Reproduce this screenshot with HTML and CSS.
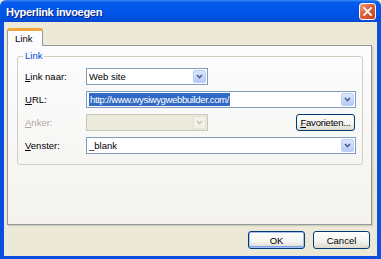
FILE: index.html
```html
<!DOCTYPE html>
<html lang="nl">
<head>
  <meta charset="UTF-8">
  <title>Hyperlink invoegen</title>
  <link rel="stylesheet" href="styles.css">
</head>
<body>

  <div class="window">
    <div class="titlebar">
      <span class="title">Hyperlink invoegen</span>
      <span class="close">
        <svg width="9" height="9" viewBox="0 0 9 9"><path d="M1 1 L8 8 M8 1 L1 8" stroke="#fff" stroke-width="1.8" stroke-linecap="square"/></svg>
      </span>
    </div>

    <div class="client">
      <div class="tabs">
        <div class="tab">Link</div>
      </div>

      <div class="panel">
        <fieldset class="group">
          <legend>Link</legend>

          <div class="row">
            <label><u>L</u>ink naar:</label>
            <div class="combo short">
              <span class="value">Web site</span>
              <span class="arrow"><svg width="7" height="5" viewBox="0 0 7 5"><path d="M1 1 L3.5 3.5 L6 1" fill="none" stroke="#4d6185" stroke-width="1.6"/></svg></span>
            </div>
          </div>

          <div class="row">
            <label><u>U</u>RL:</label>
            <div class="combo wide">
              <span class="value"><span class="selected">http://www.wysiwygwebbuilder.com/</span></span>
              <span class="arrow"><svg width="7" height="5" viewBox="0 0 7 5"><path d="M1 1 L3.5 3.5 L6 1" fill="none" stroke="#4d6185" stroke-width="1.6"/></svg></span>
            </div>
          </div>

          <div class="row">
            <label class="disabled"><u>A</u>nker:</label>
            <div class="combo short off">
              <span class="value"></span>
              <span class="arrow"><svg width="7" height="5" viewBox="0 0 7 5"><path d="M1 1 L3.5 3.5 L6 1" fill="none" stroke="#c9c7ba" stroke-width="1.6"/></svg></span>
            </div>
            <button type="button" class="btn fav"><u>F</u>avorieten...</button>
          </div>

          <div class="row">
            <label><u>V</u>enster:</label>
            <div class="combo wide">
              <span class="value">_blank</span>
              <span class="arrow"><svg width="7" height="5" viewBox="0 0 7 5"><path d="M1 1 L3.5 3.5 L6 1" fill="none" stroke="#4d6185" stroke-width="1.6"/></svg></span>
            </div>
          </div>
        </fieldset>
      </div>

      <div class="actions">
        <button type="button" class="btn default">OK</button>
        <button type="button" class="btn">Cancel</button>
      </div>
    </div>
  </div>

</body>
</html>
```

FILE: styles.css
```css
body {
  margin: 0;
  font-family: "Liberation Sans", Arial, sans-serif;
  font-size: 9.5px;
  color: #000;
  background: #fff;
}

.window {
  width: 381px;
  height: 259px;
  display: flex;
  flex-direction: column;
  background: #ece9d8;
}

.titlebar {
  height: 22px;
  flex: none;
  display: flex;
  align-items: center;
  justify-content: space-between;
  padding: 0 5px 0 6px;
  border-radius: 6px 6px 0 0;
  background: linear-gradient(#3d8cf6 0, #0a5fea 2px, #0058ee 5px, #0055e6 14px, #0150dd 19px, #0a46cf 22px);
}

.title {
  color: #fff;
  font-weight: bold;
  font-size: 11px;
  letter-spacing: -0.3px;
  text-shadow: 1px 1px 0 #0f1f80;
  padding-top: 1px;
}

.close {
  width: 15px;
  height: 15px;
  display: flex;
  align-items: center;
  justify-content: center;
  border: 1px solid #fff;
  border-radius: 3px;
  background: linear-gradient(135deg, #f0a07d, #e0603a 45%, #c8411c);
}

.client {
  flex: 1;
  display: flex;
  flex-direction: column;
  border-style: solid;
  border-color: #0b4fe0;
  border-width: 0 4px 3px 4px;
  padding: 6px 5px 7px 3px;
}

.tabs {
  display: flex;
  height: 17px;
  position: relative;
  z-index: 1;
}

.tab {
  width: 36px;
  box-sizing: border-box;
  padding: 2px 0 0 7px;
  background: #fcfcfe;
  border: 1px solid #919b9c;
  border-bottom: none;
  border-top: 3px solid #f2a53a;
  border-radius: 3px 3px 0 0;
  margin-bottom: -1px;
}

.panel {
  flex: 1;
  border: 1px solid #919b9c;
  background: linear-gradient(#fcfcfe, #f4f3ee);
  box-shadow: 1px 1px 0 #d0cebf, 2px 2px 0 #e3e0d0;
  padding: 4px 8px 0 9px;
}

.group {
  margin: 0;
  padding: 6px 6px 10px 7px;
  border: 1px solid #d0d0bf;
  border-radius: 3px;
  min-width: 0;
}

.group legend {
  color: #0046d5;
  padding: 0 2px;
  margin-left: -2px;
  line-height: 12px;
}

.row {
  display: flex;
  align-items: center;
  height: 17px;
  margin-bottom: 6px;
}

.row:last-child {
  margin-bottom: 0;
}

.row label {
  width: 61px;
  flex: none;
}

.row label.disabled {
  color: #aca899;
}

.combo {
  height: 17px;
  box-sizing: border-box;
  border: 1px solid #7f9db9;
  background: #fff;
  display: flex;
  align-items: center;
  justify-content: space-between;
  padding: 1px 1px 1px 2px;
}

.combo.short {
  width: 122px;
}

.combo.wide {
  width: 271px;
}

.combo.off {
  background: #ebeadb;
  border-color: #c9c7ba;
}

.value {
  white-space: nowrap;
  line-height: 13px;
}

.selected {
  background: #316ac5;
  color: #fff;
  display: inline-block;
  padding: 0 1px;
  letter-spacing: -0.35px;
}

.arrow {
  width: 13px;
  height: 13px;
  box-sizing: border-box;
  display: flex;
  align-items: center;
  justify-content: center;
  border: 1px solid #bccdf6;
  border-radius: 2px;
  background: linear-gradient(#dbe5fd, #b7caf7);
}

.off .arrow {
  background: #f3f2ea;
  border-color: #e3e1d5;
}

.btn {
  font: inherit;
  height: 18px;
  box-sizing: border-box;
  padding: 0;
  border: 1px solid #003c74;
  border-radius: 3px;
  background: linear-gradient(#ffffff, #f3f3ef 60%, #dcd8cc);
  color: #000;
}

.fav {
  width: 59px;
  height: 17px;
  margin-left: auto;
  margin-right: 1px;
  letter-spacing: -0.2px;
}

.actions {
  display: flex;
  justify-content: flex-end;
  gap: 8px;
  margin-top: 6px;
  padding-right: 2px;
}

.actions .btn {
  width: 57px;
}

.btn.default {
  box-shadow: inset 0 0 0 1px #a9c1f2, inset 0 -1px 0 1px #7e9ff0;
}
```
